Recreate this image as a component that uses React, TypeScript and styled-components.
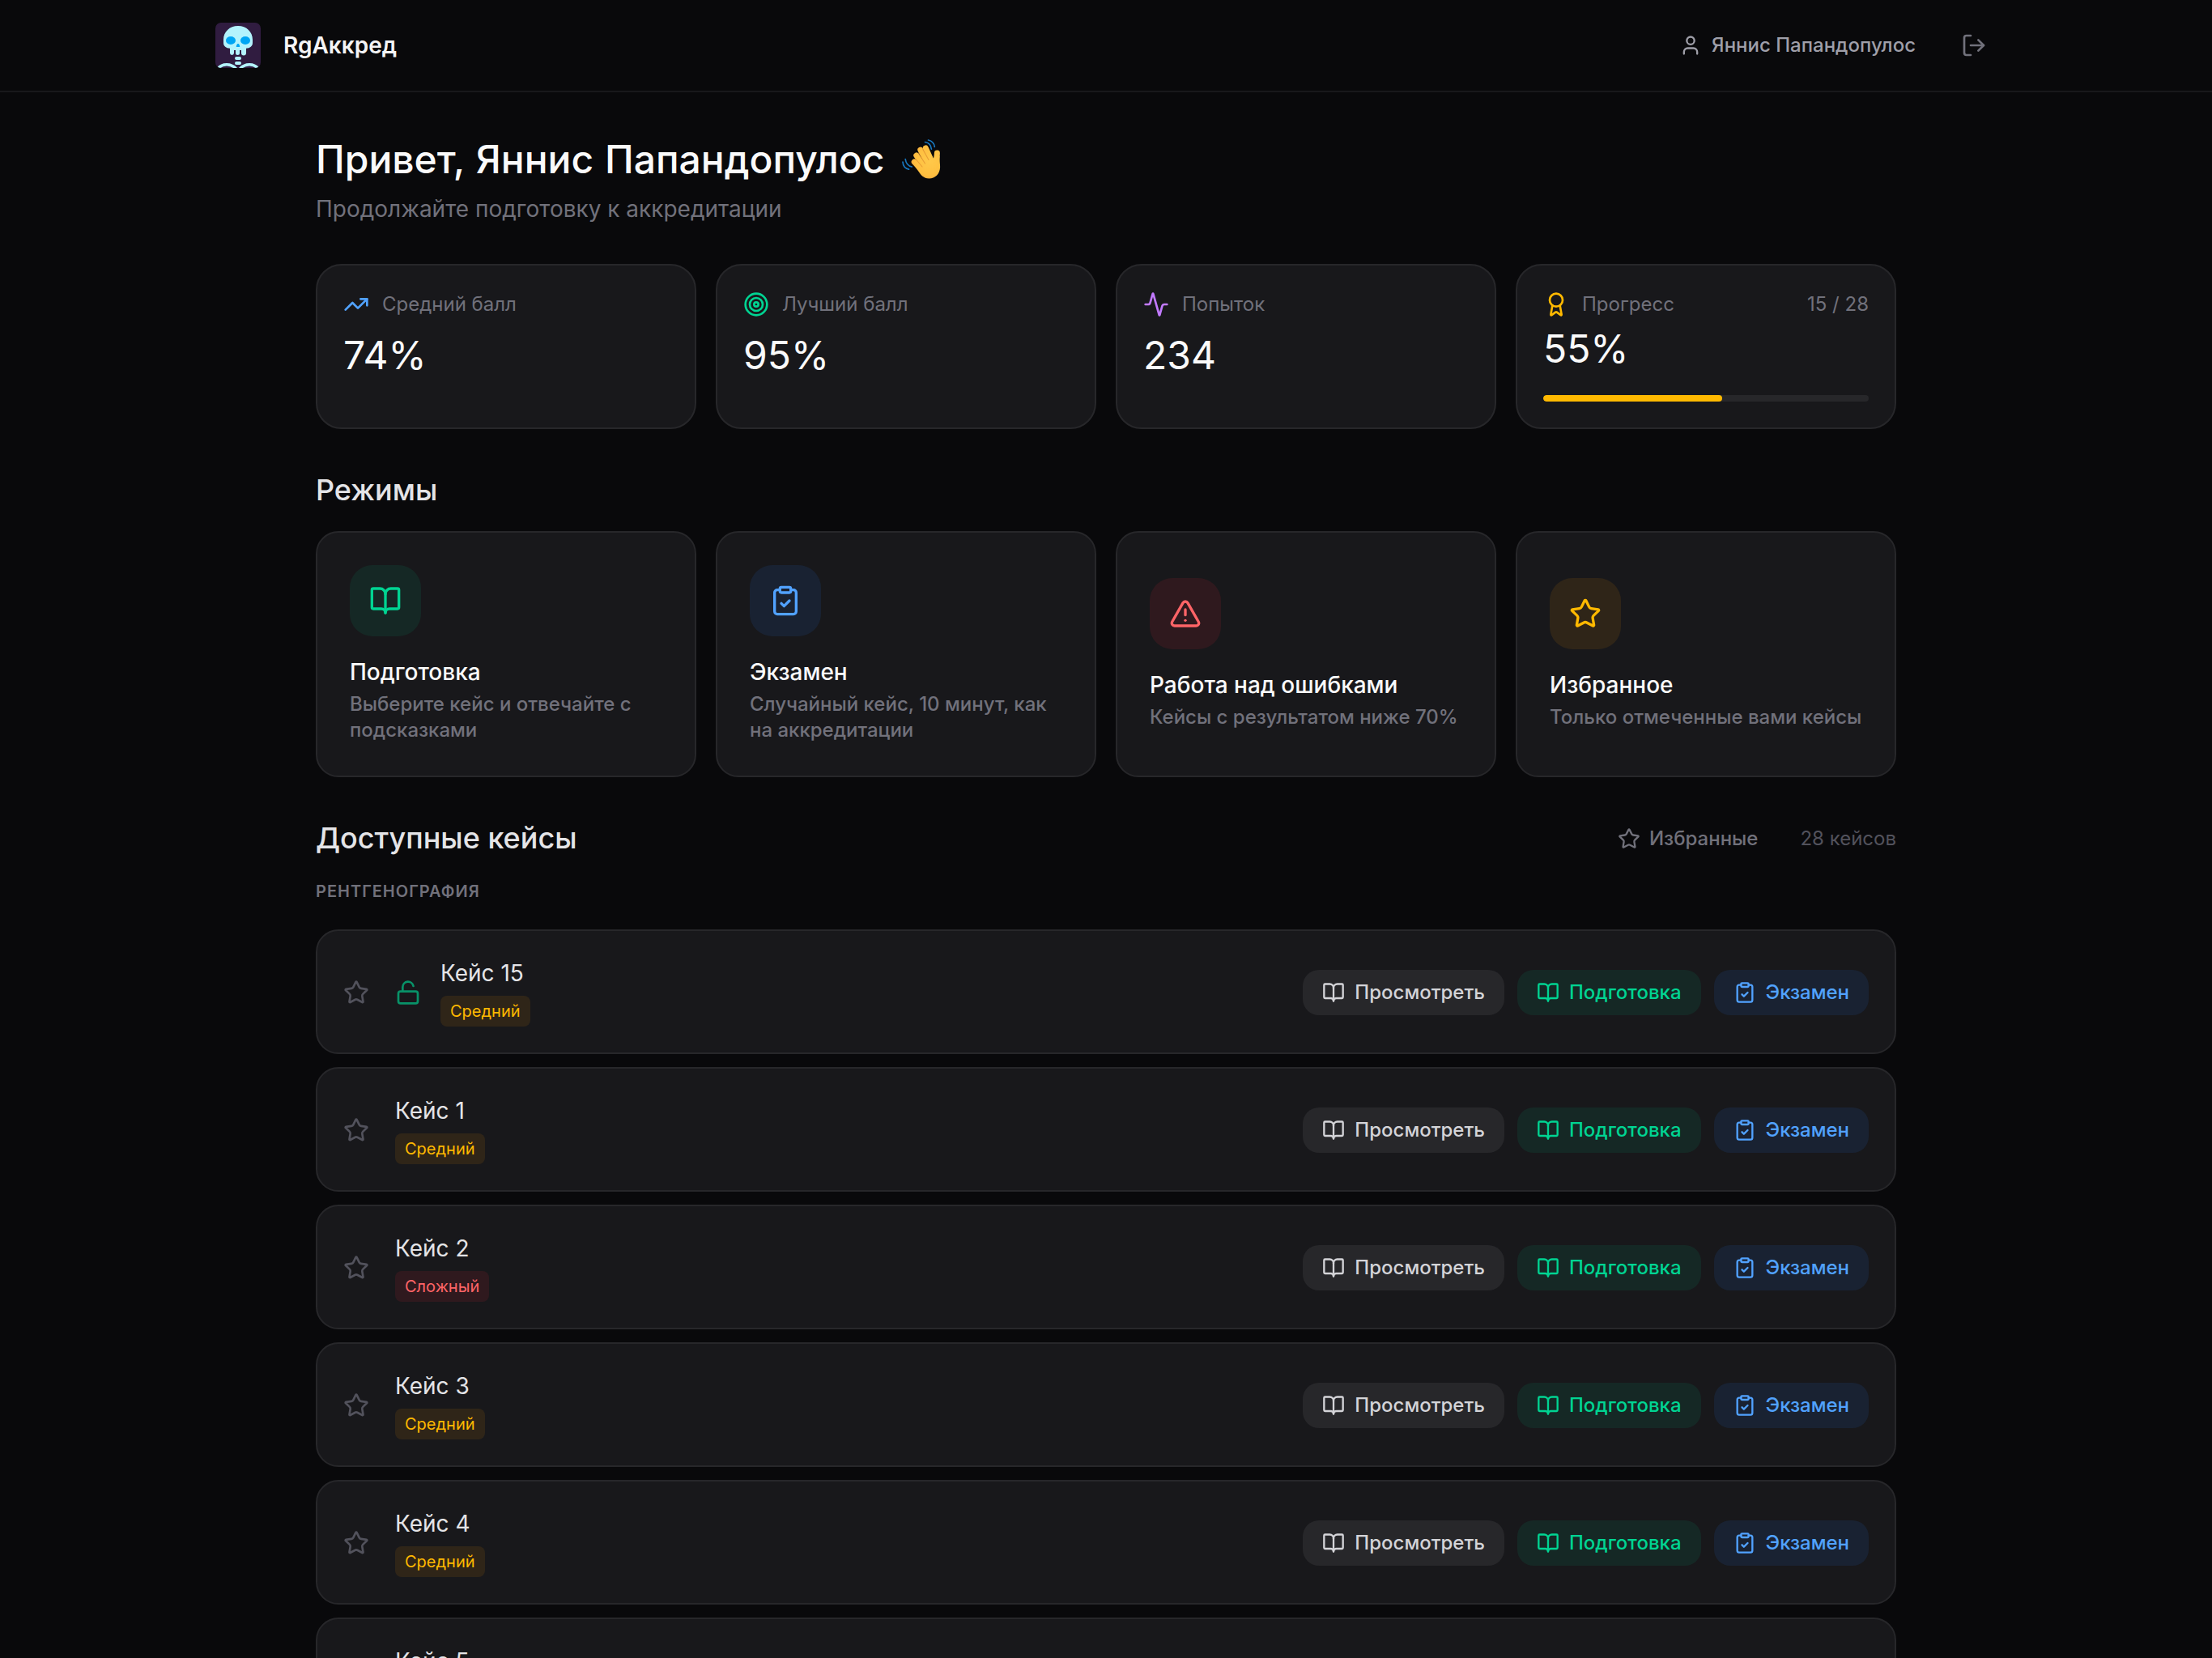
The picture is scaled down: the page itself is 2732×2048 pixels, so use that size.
import React, {FC} from 'react';
import styled, {createGlobalStyle} from "styled-components";
import {
    Activity, Award, BookOpen, ClipboardCheck, LockOpen, LogOut, LucideIcon,
    Star, Target, TrendingUp, TriangleAlert, User
} from "lucide-react";

//region Constants
const Colors = {
    page: "#09090b",
    card: "#18181b",
    border: "#27272a",
    white: "#fafafa",
    light: "#e4e4e7",
    text: "#d4d4d8",
    soft: "#9f9fa9",
    muted: "#71717b",
    dim: "#52525c",
};

type Tone = "green" | "blue" | "red" | "amber" | "purple" | "gray";

const tones: Record<Tone, {color: string, background: string}> = {
    green: {color: "#00d492", background: "rgba(0, 188, 125, 0.1)"},
    blue: {color: "#51a2ff", background: "rgba(43, 127, 255, 0.1)"},
    red: {color: "#ff6467", background: "rgba(251, 44, 54, 0.1)"},
    amber: {color: "#ffb900", background: "rgba(254, 154, 0, 0.1)"},
    purple: {color: "#c27aff", background: "rgba(173, 70, 255, 0.1)"},
    gray: {color: Colors.text, background: Colors.border},
};
//endregion

//region TSProps
interface Stat {
    icon: LucideIcon,
    tone: Tone,
    label: string,
    value: string,
    progress?: {done: number, total: number, percent: number},
}

interface Mode {
    icon: LucideIcon,
    tone: Tone,
    title: string,
    text: string,
}

interface Case {
    id: number,
    level: "Средний" | "Сложный",
    unlocked?: boolean,
}
//endregion

//region Data
const userName = "Яннис Папандопулос";

const stats: Stat[] = [
    {icon: TrendingUp, tone: "blue", label: "Средний балл", value: "74%"},
    {icon: Target, tone: "green", label: "Лучший балл", value: "95%"},
    {icon: Activity, tone: "purple", label: "Попыток", value: "234"},
    {
        icon: Award, tone: "amber", label: "Прогресс", value: "55%",
        progress: {done: 15, total: 28, percent: 55}
    },
];

const modes: Mode[] = [
    {icon: BookOpen, tone: "green", title: "Подготовка", text: "Выберите кейс и отвечайте с подсказками"},
    {icon: ClipboardCheck, tone: "blue", title: "Экзамен", text: "Случайный кейс, 10 минут, как на аккредитации"},
    {icon: TriangleAlert, tone: "red", title: "Работа над ошибками", text: "Кейсы с результатом ниже 70%"},
    {icon: Star, tone: "amber", title: "Избранное", text: "Только отмеченные вами кейсы"},
];

const cases: Case[] = [
    {id: 15, level: "Средний", unlocked: true},
    {id: 1, level: "Средний"},
    {id: 2, level: "Сложный"},
    {id: 3, level: "Средний"},
    {id: 4, level: "Средний"},
    {id: 5, level: "Средний"},
];
//endregion

//region Styled
const GlobalStyle = createGlobalStyle`
  * {
    box-sizing: border-box;
  }

  body {
    margin: 0;
    background-color: ${Colors.page};
    color: ${Colors.white};
    font-family: Inter, "Liberation Sans", sans-serif;
    font-size: 28px;
    line-height: 1.5;
  }

  h1, h2, h3, h4, p {
    margin: 0;
    font-size: inherit;
    font-weight: inherit;
  }

  button {
    border: none;
    padding: 0;
    background: none;
    color: inherit;
    font: inherit;
    cursor: pointer;
  }

  svg {
    display: block;
    flex-shrink: 0;
  }
`;

const Page = styled.div`
  height: 2048px;
  overflow: hidden;
`;

const Header = styled.header`
  height: 114px;
  border-bottom: 2px solid ${Colors.card};
`;

const HeaderInner = styled.div`
  width: 2200px;
  height: 100%;
  margin: 0 auto;
  display: flex;
  align-items: center;
  justify-content: space-between;
`;

const Brand = styled.div`
  display: flex;
  align-items: center;
  gap: 28px;
  font-weight: 600;
  color: #f4f4f5;
`;

const Account = styled.div`
  display: flex;
  align-items: center;
  gap: 44px;
`;

const UserName = styled.div`
  display: flex;
  align-items: center;
  gap: 12px;
  font-size: 24px;
  font-weight: 500;
  color: ${Colors.soft};
`;

const LogoutButton = styled.button`
  padding: 12px;
  color: ${Colors.muted};
`;

const Main = styled.main`
  width: 1952px;
  margin: 0 auto;
  padding-top: 55px;
`;

const Greeting = styled.h1`
  display: flex;
  align-items: center;
  gap: 21px;
  height: 56px;
  font-size: 48px;
  font-weight: 500;
  word-spacing: 1px;
`;

const Subtitle = styled.p`
  margin-top: 12px;
  color: ${Colors.muted};
`;

const Grid = styled.div`
  display: grid;
  grid-template-columns: repeat(4, 1fr);
  gap: 24px;
`;

const StatGrid = styled(Grid)`
  margin-top: 47px;
`;

const ModeGrid = styled(Grid)`
  margin-top: 25px;
`;

const StatCard = styled.div`
  height: 204px;
  padding: 32px;
  display: flex;
  flex-direction: column;
  background-color: ${Colors.card};
  border: 2px solid ${Colors.border};
  border-radius: 32px;
`;

const StatHead = styled.div`
  height: 32px;
  display: flex;
  align-items: center;
  gap: 16px;
  font-size: 24px;
  line-height: 32px;
  color: ${Colors.muted};
`;

const StatCount = styled.span`
  margin-left: auto;
`;

const StatIcon = styled.span<{$tone: Tone}>`
  color: ${({$tone}) => tones[$tone].color};
`;

const StatValue = styled.div<{$compact: boolean}>`
  margin-top: ${({$compact}) => $compact ? 11 : 19}px;
  font-size: 48px;
  line-height: 56px;
`;

const Track = styled.div`
  height: 8px;
  margin-top: auto;
  border-radius: 4px;
  background-color: ${Colors.border};
  overflow: hidden;
`;

const Fill = styled.div`
  height: 100%;
  border-radius: 4px;
  background-color: ${tones.amber.color};
`;

const SectionTitle = styled.h2`
  font-size: 36px;
  line-height: 52px;
  font-weight: 500;
  color: ${Colors.light};
`;

const ModesTitle = styled(SectionTitle)`
  margin-top: 49px;
`;

const ModeCard = styled.button`
  height: 304px;
  padding: 40px;
  display: flex;
  flex-direction: column;
  justify-content: center;
  align-items: flex-start;
  text-align: left;
  font-weight: 500;
  background-color: ${Colors.card};
  border: 2px solid ${Colors.border};
  border-radius: 28px;
`;

const ModeIcon = styled.span<{$tone: Tone}>`
  width: 88px;
  height: 88px;
  display: flex;
  align-items: center;
  justify-content: center;
  border-radius: 28px;
  color: ${({$tone}) => tones[$tone].color};
  background-color: ${({$tone}) => tones[$tone].background};
`;

const ModeTitle = styled.h3`
  margin-top: 28px;
  line-height: 32px;
`;

const ModeText = styled.p`
  margin-top: 8px;
  font-size: 24px;
  line-height: 32px;
  color: ${Colors.muted};
`;

const CasesHead = styled.div`
  margin-top: 49px;
  display: flex;
  align-items: center;
  justify-content: space-between;
`;

const CasesTools = styled.div`
  padding-top: 2px;
  display: flex;
  align-items: center;
  gap: 52px;
  font-size: 24px;
  color: ${Colors.dim};
`;

const FavoritesButton = styled.button`
  display: flex;
  align-items: center;
  gap: 11px;
  font-weight: 500;
  color: ${Colors.muted};
`;

const GroupTitle = styled.h4`
  margin-top: 24px;
  font-size: 20px;
  line-height: 32px;
  font-weight: 600;
  letter-spacing: 0.05em;
  text-transform: uppercase;
  color: ${Colors.muted};
`;

const CaseList = styled.div`
  margin-top: 31px;
  display: flex;
  flex-direction: column;
  gap: 16px;
`;

const CaseRow = styled.article`
  height: 154px;
  padding: 32px 32px 30px;
  display: flex;
  align-items: center;
  background-color: ${Colors.card};
  border: 2px solid ${Colors.border};
  border-radius: 28px;
`;

const StarButton = styled.button`
  margin-right: 32px;
  color: ${Colors.dim};
`;

const LockMark = styled.span`
  margin-right: 24px;
  color: ${tones.green.color};
  opacity: 0.65;
`;

const CaseInfo = styled.div`
  flex: 1;
  padding-bottom: 2px;
  display: flex;
  flex-direction: column;
  align-items: flex-start;
  gap: 8px;
  color: ${Colors.light};
`;

const CaseTitle = styled.h3`
  line-height: 40px;
`;

const Badge = styled.span<{$tone: Tone}>`
  height: 38px;
  padding: 0 12px;
  display: flex;
  align-items: center;
  border-radius: 8px;
  font-size: 20px;
  color: ${({$tone}) => tones[$tone].color};
  background-color: ${({$tone}) => tones[$tone].background};
`;

const Actions = styled.div`
  display: flex;
  gap: 16px;
`;

const ActionButton = styled.button<{$tone: Tone}>`
  height: 56px;
  padding: 0 24px;
  display: flex;
  align-items: center;
  gap: 12px;
  border-radius: 20px;
  font-size: 24px;
  font-weight: 500;
  color: ${({$tone}) => tones[$tone].color};
  background-color: ${({$tone}) => tones[$tone].background};
`;
//endregion

const Logo: FC = () => (
    <svg width="56" height="56" viewBox="0 0 56 56">
        <defs>
            <clipPath id="logo-clip">
                <rect width="56" height="56" rx="7"/>
            </clipPath>
        </defs>
        <g clipPath="url(#logo-clip)">
            <rect width="56" height="56" fill="#301c40"/>
            <path
                fill="#b3f3fd"
                d="M28 4C17.500 4 10 11.500 10 21v4c0 4 3.200 6.600 8 6.800V37.500a2.500 2.500 0 0 0 5 0V34h2v3.500a2.500 2.500 0 0 0 5 0V34h2v3.500a2.500 2.500 0 0 0 6 0V31.800c4.800-.2 8-2.800 8-6.800v-4C46 11.500 38.500 4 28 4z"
            />
            <ellipse cx="19" cy="22" rx="6" ry="5" fill="#00a6f4"/>
            <ellipse cx="37" cy="22" rx="6" ry="5" fill="#00a6f4"/>
            <path fill="#00a6f4" d="M28 26c1.300 0 2.200 2 2.200 4h-4.400c0-2 .9-4 2.200-4z"/>
            <rect x="24" y="42" width="8" height="4" rx="2" fill="#b3f3fd"/>
            <rect x="24" y="48" width="8" height="4" rx="2" fill="#b3f3fd"/>
            <path
                fill="none"
                stroke="#b3f3fd"
                strokeWidth="3.500"
                d="M3.500 56.500c2.500-3.500 6-4.800 10.500-4.800s8.500 1.800 11.500 5M52.500 56.500c-2.500-3.500-6-4.800-10.500-4.800s-8.500 1.800-11.500 5"
            />
        </g>
    </svg>
);

const WavingHand: FC = () => (
    <svg width="49" height="50" viewBox="0 0 49 50">
        <defs>
            <radialGradient id="hand" gradientUnits="userSpaceOnUse" cx="34" cy="27" r="26">
                <stop offset="0" stopColor="#ffc94a"/>
                <stop offset="0.7" stopColor="#ffbf40"/>
                <stop offset="1" stopColor="#f2a03c"/>
            </radialGradient>
        </defs>
        <g fill="none" stroke="url(#hand)" strokeWidth="7" strokeLinecap="round">
            <path d="M29.300 11L37 28"/>
            <path d="M22.800 13.200L33 32"/>
            <path d="M17.800 20L29 36"/>
            <path d="M15.200 28L27 40"/>
            <path d="M43.400 17L42.500 32"/>
        </g>
        <path
            fill="url(#hand)"
            d="M24 27l9-8c2 3.500 3.500 5.200 5 5.200c1.200 0 1.700-2.200 2-5.200l6.500 2c-.8 4.500.8 8.500.6 13.500C46.800 43 41 48.500 33.500 48.500c-7 0-10.200-4.500-12.800-8.500L14 31z"
        />
        <path
            fill="none"
            stroke="#dd8a2e"
            strokeWidth="1.100"
            strokeLinecap="round"
            opacity="0.65"
            d="M25.800 12.500l7.200 13M20.300 17l8.200 13M17 24.500l8 9.500"
        />
        <path
            fill="none"
            stroke="#1878c0"
            strokeWidth="1.700"
            strokeLinecap="round"
            d="M28.500 3.500c4.300.6 7.300 3.800 7.900 8.600M32.500 1c4.400 1 7.300 4 7.800 8.400M4.200 24.500c.6 4.800 3.300 8.600 8 9.500M1 28c.3 4.500 3 8.200 7.500 9.200"
        />
    </svg>
);

const StatItem: FC<{stat: Stat}> = ({stat}) => {
    const {icon: Icon, tone, label, value, progress} = stat;

    return (
        <StatCard>
            <StatHead>
                <StatIcon $tone={tone}><Icon size={32}/></StatIcon>
                <span>{label}</span>
                {progress && <StatCount>{progress.done} / {progress.total}</StatCount>}
            </StatHead>
            <StatValue $compact={!!progress}>{value}</StatValue>
            {progress && (
                <Track>
                    <Fill style={{width: `${progress.percent}%`}}/>
                </Track>
            )}
        </StatCard>
    );
};

const ModeItem: FC<{mode: Mode}> = ({mode}) => {
    const {icon: Icon, tone, title, text} = mode;

    return (
        <ModeCard>
            <ModeIcon $tone={tone}><Icon size={40}/></ModeIcon>
            <ModeTitle>{title}</ModeTitle>
            <ModeText>{text}</ModeText>
        </ModeCard>
    );
};

const CaseItem: FC<{item: Case}> = ({item}) => (
    <CaseRow>
        <StarButton><Star size={32}/></StarButton>
        {item.unlocked && <LockMark><LockOpen size={32}/></LockMark>}
        <CaseInfo>
            <CaseTitle>Кейс {item.id}</CaseTitle>
            <Badge $tone={item.level === "Сложный" ? "red" : "amber"}>{item.level}</Badge>
        </CaseInfo>
        <Actions>
            <ActionButton $tone="gray"><BookOpen size={28}/>Просмотреть</ActionButton>
            <ActionButton $tone="green"><BookOpen size={28}/>Подготовка</ActionButton>
            <ActionButton $tone="blue"><ClipboardCheck size={28}/>Экзамен</ActionButton>
        </Actions>
    </CaseRow>
);

const App: FC = () => (
    <Page>
        <GlobalStyle/>
        <Header>
            <HeaderInner>
                <Brand>
                    <Logo/>
                    RgАккред
                </Brand>
                <Account>
                    <UserName>
                        <User size={28}/>
                        {userName}
                    </UserName>
                    <LogoutButton><LogOut size={32}/></LogoutButton>
                </Account>
            </HeaderInner>
        </Header>
        <Main>
            <Greeting>
                Привет, {userName}
                <WavingHand/>
            </Greeting>
            <Subtitle>Продолжайте подготовку к аккредитации</Subtitle>
            <StatGrid>
                {stats.map((stat) => <StatItem key={stat.label} stat={stat}/>)}
            </StatGrid>
            <ModesTitle>Режимы</ModesTitle>
            <ModeGrid>
                {modes.map((mode) => <ModeItem key={mode.title} mode={mode}/>)}
            </ModeGrid>
            <CasesHead>
                <SectionTitle>Доступные кейсы</SectionTitle>
                <CasesTools>
                    <FavoritesButton>
                        <Star size={28}/>
                        Избранные
                    </FavoritesButton>
                    <span>28 кейсов</span>
                </CasesTools>
            </CasesHead>
            <GroupTitle>Рентгенография</GroupTitle>
            <CaseList>
                {cases.map((item) => <CaseItem key={item.id} item={item}/>)}
            </CaseList>
        </Main>
    </Page>
);

export default App;
